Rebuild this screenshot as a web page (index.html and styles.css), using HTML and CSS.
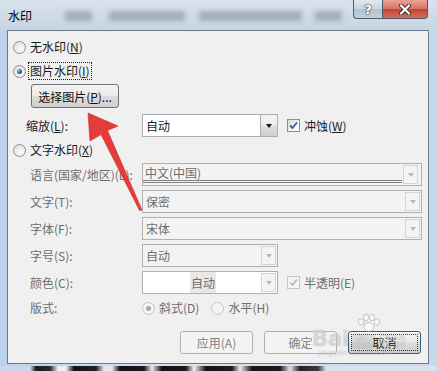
FILE: index.html
```html
<!DOCTYPE html>
<html lang="zh-CN">
<head>
  <meta charset="UTF-8" />
  <title>水印</title>
  <link rel="stylesheet" href="styles.css">
</head>
<body>

  <div class="window">
    <div class="titlebar">
      <span class="title">水印</span>
      <div class="glass">
        <span class="smudge w1"></span>
        <span class="smudge w2"></span>
        <span class="smudge w3"></span>
        <span class="smudge w4"></span>
      </div>
      <div class="caption">
        <div class="cap help">?</div>
        <div class="cap close">
          <svg width="14" height="11" viewBox="0 0 14 11">
            <path d="M3 1.5 L11 9.5 M11 1.5 L3 9.5" stroke="#4a2a25" stroke-width="4" stroke-linecap="round"/>
            <path d="M3 1.5 L11 9.5 M11 1.5 L3 9.5" stroke="#fff" stroke-width="2.2" stroke-linecap="round"/>
          </svg>
        </div>
      </div>
    </div>

    <div class="client">
      <div class="row radio-row">
        <span class="radio"></span>
        <span class="opt-text">无水印(<u>N</u>)</span>
      </div>
      <div class="row radio-row">
        <span class="radio on"></span>
        <span class="opt-text focus">图片水印(<u>I</u>)</span>
      </div>
      <div class="row pick-row">
        <button class="btn pick">选择图片(<u>P</u>)...</button>
      </div>
      <div class="row field-row scale-row">
        <span class="lbl">缩放(<u>L</u>):</span>
        <div class="combo short">
          <span class="val">自动</span>
          <span class="drop"></span>
        </div>
        <span class="check on"><svg width="11" height="11" viewBox="0 0 11 11"><path d="M2 5.5 L4.5 8 L9 2.5" fill="none" stroke="#3b5794" stroke-width="1.8"/></svg></span>
        <span class="check-text">冲蚀(<u>W</u>)</span>
      </div>
      <div class="row radio-row text-row">
        <span class="radio"></span>
        <span class="opt-text">文字水印(<u>X</u>)</span>
      </div>

      <div class="row field-row combo-row first">
        <span class="lbl off">语言(国家/地区)(L):</span>
        <div class="combo long off">
          <span class="val lined">中文(中国)</span>
          <span class="drop"></span>
        </div>
      </div>
      <div class="row field-row combo-row">
        <span class="lbl off">文字(T):</span>
        <div class="combo long off">
          <span class="val">保密</span>
          <span class="drop"></span>
        </div>
      </div>
      <div class="row field-row combo-row">
        <span class="lbl off">字体(F):</span>
        <div class="combo long off">
          <span class="val">宋体</span>
          <span class="drop"></span>
        </div>
      </div>
      <div class="row field-row combo-row">
        <span class="lbl off">字号(S):</span>
        <div class="combo short off">
          <span class="val">自动</span>
          <span class="drop"></span>
        </div>
      </div>
      <div class="row field-row combo-row">
        <span class="lbl off">颜色(C):</span>
        <div class="combo short off white">
          <span class="val centered"><span class="hl">自动</span></span>
          <span class="drop"></span>
        </div>
        <span class="check off"><svg width="11" height="11" viewBox="0 0 11 11"><path d="M2 5.5 L4.5 8 L9 2.5" fill="none" stroke="#b4b4b4" stroke-width="1.6"/></svg></span>
        <span class="check-text off">半透明(E)</span>
      </div>
      <div class="row field-row layout-row">
        <span class="lbl off">版式:</span>
        <span class="radio on off"></span>
        <span class="opt-text off">斜式(D)</span>
        <span class="radio off second"></span>
        <span class="opt-text off">水平(H)</span>
      </div>

      <div class="row actions">
        <button class="btn wide" disabled>应用(A)</button>
        <button class="btn wide" disabled>确定</button>
        <button class="btn wide default"><span class="focus-box">取消</span></button>
      </div>
    </div>

    <div class="frame-bottom"></div>
    <div class="desk"></div>

    <div class="baidu">
      <svg class="paw" width="26" height="18" viewBox="0 0 26 18">
        <g fill="rgba(255,255,255,0.55)" stroke="rgba(110,110,110,0.45)" stroke-width="0.8">
          <ellipse cx="5" cy="8" rx="2.6" ry="3.2"/>
          <ellipse cx="10" cy="3.5" rx="2.6" ry="3.2"/>
          <ellipse cx="16" cy="3.5" rx="2.6" ry="3.2"/>
          <ellipse cx="21" cy="8" rx="2.6" ry="3.2"/>
          <ellipse cx="13" cy="13" rx="5" ry="4.5"/>
        </g>
      </svg>
      <div class="mark">
        <span class="bai">Bai</span><span class="du">du</span><span class="jy">经验</span>
      </div>
      <div class="url">jingyan.baidu.com</div>
    </div>

    <svg class="arrow" width="437" height="371" viewBox="0 0 437 371">
      <polygon points="88,113 118,126 107.5,130.5 142,210 139.5,210.5 101,134.5 90,141" fill="#e63b3b" stroke="#c92a2a" stroke-width="0.6" stroke-linejoin="round"/>
    </svg>
  </div>

</body>
</html>
```

FILE: styles.css
```css
* {
  box-sizing: border-box;
}

body {
  margin: 0;
  width: 437px;
  height: 371px;
  overflow: hidden;
  font-family: "Noto Sans CJK SC", "Microsoft YaHei", sans-serif;
  font-size: 12px;
  color: #1a1a1a;
  background: #c4d6ea;
}

.window {
  position: relative;
  width: 437px;
  height: 371px;
  background: linear-gradient(to right, #bcd2ea, #d6e3f0 45%, #c8d8ea);
}

/* title bar */
.titlebar {
  display: flex;
  align-items: flex-start;
  height: 30px;
  padding-left: 8px;
  background: linear-gradient(#d9e2ec, #c8d4e1);
}

.title {
  margin-top: 8px;
  line-height: 16px;
  color: #000;
}

.glass {
  display: flex;
  margin-left: 33px;
  margin-top: 11px;
}

.smudge {
  height: 10px;
  background: rgba(60, 72, 90, 0.3);
  filter: blur(2.5px);
}

.w1 { width: 27px; }
.w2 { width: 76px; margin-left: 17px; }
.w3 { width: 103px; margin-left: 14px; }
.w4 { width: 27px; margin-left: 13px; }

.caption {
  display: flex;
  margin-left: auto;
  margin-right: 9px;
}

.cap {
  display: flex;
  align-items: center;
  justify-content: center;
  height: 19px;
  border: 1px solid #4d5d70;
  border-top: none;
}

.help {
  width: 29px;
  border-right: none;
  border-radius: 0 0 0 4px;
  background: linear-gradient(#e3e9f0, #c9d3de 50%, #b3c0cf 51%, #c3cfdc);
  font-family: "DejaVu Sans", sans-serif;
  font-weight: bold;
  font-size: 13px;
  color: #fff;
  text-shadow: 0 0 1px #3a4656, 0 0 1px #3a4656, 0 0 2px #3a4656;
}

.close {
  width: 46px;
  border-radius: 0 0 4px 0;
  background: linear-gradient(#e8a598, #d8705f 50%, #c2422f 51%, #d2705c);
}

/* client area */
.client {
  margin-left: 7px;
  width: 422px;
  height: 334px;
  padding: 4px 7px 0 5px;
  border: 1px solid #6b7a8a;
  background: #f0f0f0;
}

.row {
  display: flex;
  align-items: center;
}

.radio-row {
  height: 24px;
}

.radio {
  display: flex;
  align-items: center;
  justify-content: center;
  flex: none;
  width: 13px;
  height: 13px;
  border: 1px solid #8e8f8f;
  border-radius: 50%;
  background: radial-gradient(circle at 60% 65%, #fdfdfd, #d8d8d8);
}

.radio.on::after {
  content: "";
  width: 5px;
  height: 5px;
  border-radius: 50%;
  background: radial-gradient(circle at 35% 35%, #7cc3ee, #17457a 70%);
}

.radio.off {
  border-color: #c5c5c5;
  background: #f4f4f4;
}

.radio.on.off::after {
  background: #a8a8a8;
}

.opt-text {
  margin-left: 4px;
  line-height: 16px;
}

.opt-text.focus {
  margin-left: 3px;
  padding: 0 1px;
  outline: 1px dotted #222;
}

.off {
  color: #6d6d6d;
}

.pick-row {
  margin-top: 1px;
  padding-left: 18px;
}

.btn {
  height: 23px;
  padding: 0;
  border: 1px solid #707070;
  border-radius: 3px;
  background: linear-gradient(#f3f3f3, #ebebeb 48%, #dddddd 52%, #cfcfcf);
  font: inherit;
  color: #111;
}

.pick {
  width: 88px;
  height: 24px;
}

.field-row {
  padding-left: 17px;
}

.lbl {
  flex: none;
  width: 112px;
  line-height: 16px;
}

.scale-row {
  height: 23px;
  margin-top: 6px;
  padding-left: 13px;
}

.scale-row .lbl {
  width: 116px;
}

.text-row {
  margin-top: 1px;
}

/* combo boxes */
.combo {
  display: flex;
  flex: none;
  height: 23px;
  border: 1px solid #abadb3;
  background: #fff;
}

.combo.short {
  width: 136px;
}

.combo.long {
  width: 280px;
}

.combo .val {
  flex: 1;
  padding-left: 3px;
  line-height: 21px;
}

.combo .val.lined {
  flex: none;
  width: 259px;
  height: 18px;
  margin-top: 1px;
  padding-left: 2px;
  line-height: 15px;
  border-bottom: 3px double #7e7e7e;
}

.combo .val.centered {
  text-align: center;
}

.hl {
  padding: 2px 1px;
  background: #e8e8e8;
}

.drop {
  display: flex;
  align-items: center;
  justify-content: center;
  flex: none;
  width: 17px;
  margin-left: auto;
  border-left: 1px solid #acacac;
  background: linear-gradient(#f4f4f4, #ececec 48%, #dedede 52%, #d0d0d0);
}

.drop::after {
  content: "";
  border-left: 3.5px solid transparent;
  border-right: 3.5px solid transparent;
  border-top: 4px solid #111;
}

.combo.off {
  border-color: #b0b0b0;
  background: #f3f3f3;
  color: #6d6d6d;
}

.combo.off.white {
  background: #fff;
}

.combo.off .drop {
  border: 1px solid #d4d4d4;
  margin: 1px;
  width: 15px;
  background: #f4f4f4;
}

.combo.off .drop::after {
  border-top-color: #b8b8b8;
}

.combo-row {
  height: 23px;
  margin-top: 4px;
}

.combo-row.first {
  margin-top: 1px;
}

.check {
  display: flex;
  align-items: center;
  justify-content: center;
  flex: none;
  width: 13px;
  height: 13px;
  margin-left: 9px;
  border: 1px solid #8e8f8f;
  background: linear-gradient(135deg, #d9d9d9, #f8f8f8 70%);
}

.check.off {
  border-color: #c5c5c5;
  background: #f4f4f4;
}

.check-text {
  margin-left: 4px;
  line-height: 16px;
}

.layout-row {
  height: 22px;
  margin-top: 3px;
}

.layout-row .radio.second {
  margin-left: 12px;
}

.actions {
  justify-content: flex-end;
  gap: 11px;
  margin-top: 12px;
}

.btn.wide {
  width: 73px;
}

.btn:disabled {
  border-color: #adb2b5;
  background: #f4f4f4;
  color: #838383;
}

.btn.default {
  padding: 2px;
  border-color: #3c5a78;
}

.focus-box {
  display: flex;
  align-items: center;
  justify-content: center;
  height: 100%;
  border: 1px dotted #333;
}

/* frame and desktop behind */
.frame-bottom {
  height: 2px;
}

.desk {
  height: 5px;
  background: linear-gradient(to right,
    #c9d9ea 0, #c9d9ea 30px, #1a1a1a 36px, #2a2a2a 50px, #f0f0f0 58px, #f0f0f0 66px,
    #111 74px, #222 96px, #e8e8e8 104px, #e8e8e8 112px, #111 120px, #1a1a1a 144px,
    #ececec 152px, #111 162px, #1a1a1a 186px, #f2f2f2 194px, #121212 206px, #1d1d1d 232px,
    #eee 240px, #151515 252px, #1a1a1a 280px, #e4e4e4 290px, #222 300px, #3a3a3a 318px,
    #d8e2ee 326px, #d8e2ee 100%);
}

/* baidu watermark */
.baidu {
  position: absolute;
  left: 312px;
  top: 314px;
  width: 110px;
  color: rgba(255, 255, 255, 0.5);
  text-shadow: 0 0 1px rgba(100, 100, 100, 0.5);
  font-family: "DejaVu Sans", sans-serif;
  pointer-events: none;
}

.paw {
  display: block;
  margin-left: 44px;
}

.mark {
  display: flex;
  align-items: baseline;
  margin-top: -4px;
  line-height: 22px;
}

.bai {
  font-size: 21px;
  font-weight: bold;
}

.du {
  margin-left: 3px;
  padding: 0 2px;
  border-radius: 4px;
  font-size: 13px;
  font-weight: bold;
  line-height: 15px;
  background: rgba(120, 120, 120, 0.16);
}

.jy {
  margin-left: 3px;
  font-family: "Noto Sans CJK SC", sans-serif;
  font-size: 14px;
  line-height: 16px;
}

.url {
  margin-top: -1px;
  padding-left: 6px;
  font-size: 7px;
  line-height: 8px;
  letter-spacing: 0.6px;
}

.arrow {
  position: absolute;
  left: 0;
  top: 0;
  pointer-events: none;
}
```
